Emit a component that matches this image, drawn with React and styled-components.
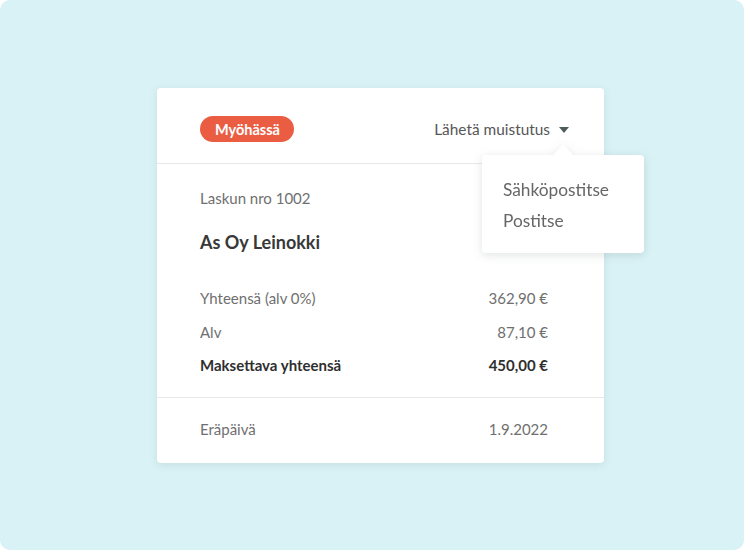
import React from "react";
import styled, { createGlobalStyle } from "styled-components";

const Global = createGlobalStyle`
  html, body { margin: 0; padding: 0; background: #ffffff; }
  body { font-family: Lato, "Noto Sans", sans-serif; -webkit-font-smoothing: antialiased; }
`;

const Stage = styled.div`
  width: 744px;
  height: 550px;
  box-sizing: border-box;
  background: #d9f2f5;
  border-radius: 10px;
  padding: 88px 0 0 157px;
`;

const Card = styled.div`
  position: relative;
  width: 447px;
  background: #fff;
  border-radius: 4px;
  box-shadow: 0 2px 8px rgba(60, 90, 95, 0.12);
`;

const Header = styled.div`
  display: flex;
  align-items: center;
  justify-content: space-between;
  padding: 28px 35px 21px 43px;
  border-bottom: 1px solid #e7e9e9;
`;

const Badge = styled.span`
  display: inline-flex;
  align-items: center;
  height: 26px;
  padding: 0 14px 0 15px;
  border-radius: 13px;
  background: #ea5d43;
  color: #fff;
  font-size: 14.5px;
  font-weight: 700;
`;

const Remind = styled.div`
  display: flex;
  align-items: center;
  gap: 9px;
  color: #565656;
  font-size: 15.4px;
`;

const Caret = styled.span`
  width: 0;
  height: 0;
  border-left: 5.5px solid transparent;
  border-right: 5.5px solid transparent;
  border-top: 6px solid #4f5c5c;
  margin-top: 1px;
`;

const Body = styled.div`
  padding: 25px 56px 22px 43px;
  border-bottom: 1px solid #e7e9e9;
`;

const InvoiceNo = styled.div`
  font-size: 15px;
  line-height: 18px;
  color: #6f6f6f;
`;

const Company = styled.div`
  margin-top: 23px;
  font-size: 18px;
  line-height: 24px;
  font-weight: 700;
  color: #383838;
`;

const Rows = styled.div`
  margin-top: 34px;
  display: flex;
  flex-direction: column;
  gap: 13.5px;
`;

const Row = styled.div`
  display: flex;
  justify-content: space-between;
  font-size: 15px;
  line-height: 20px;
  color: ${(p) => (p.$strong ? "#2f2f2f" : "#6f6f6f")};
  font-weight: ${(p) => (p.$strong ? 700 : 400)};
`;

const Footer = styled.div`
  padding: 21px 56px 24px 43px;
`;

const Dropdown = styled.div`
  position: absolute;
  left: 325px;
  top: 67px;
  width: 162px;
  filter: drop-shadow(0 2px 5px rgba(40, 60, 60, 0.14));
`;

const Arrow = styled.div`
  position: absolute;
  top: -11px;
  left: 50%;
  margin-left: -10px;
  width: 0;
  height: 0;
  border-left: 10px solid transparent;
  border-right: 10px solid transparent;
  border-bottom: 11px solid #fff;
`;

const Menu = styled.div`
  background: #fff;
  border-radius: 4px;
  padding: 23px 21px 20px;
  display: flex;
  flex-direction: column;
  gap: 7px;
`;

const Item = styled.div`
  font-size: 17.3px;
  line-height: 24px;
  color: #666;
`;

export default function App() {
  return (
    <>
      <Global />
      <Stage>
        <Card>
          <Header>
            <Badge>Myöhässä</Badge>
            <Remind>
              Lähetä muistutus
              <Caret />
            </Remind>
          </Header>
          <Body>
            <InvoiceNo>Laskun nro 1002</InvoiceNo>
            <Company>As Oy Leinokki</Company>
            <Rows>
              <Row>
                <span>Yhteensä (alv 0%)</span>
                <span>362,90 €</span>
              </Row>
              <Row>
                <span>Alv</span>
                <span>87,10 €</span>
              </Row>
              <Row $strong>
                <span>Maksettava yhteensä</span>
                <span>450,00 €</span>
              </Row>
            </Rows>
          </Body>
          <Footer>
            <Row>
              <span>Eräpäivä</span>
              <span>1.9.2022</span>
            </Row>
          </Footer>
          <Dropdown>
            <Arrow />
            <Menu>
              <Item>Sähköpostitse</Item>
              <Item>Postitse</Item>
            </Menu>
          </Dropdown>
        </Card>
      </Stage>
    </>
  );
}
